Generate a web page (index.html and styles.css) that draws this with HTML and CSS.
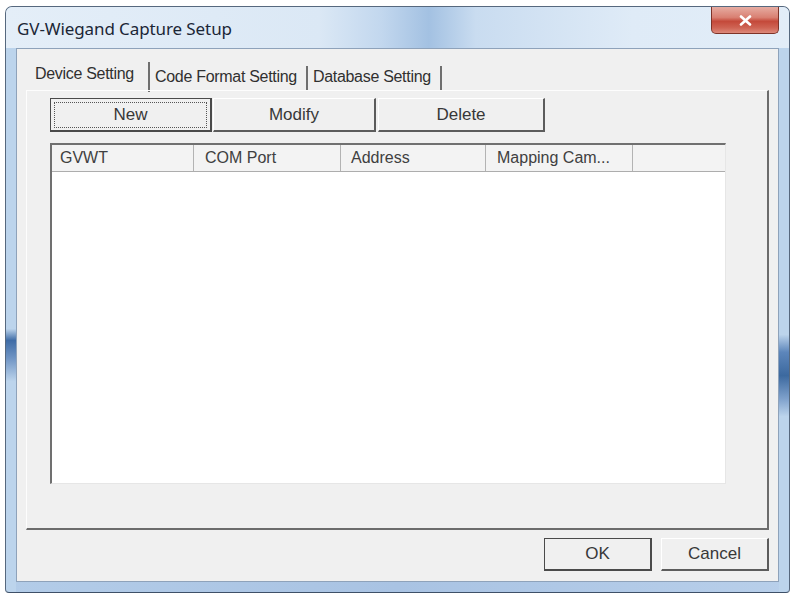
FILE: index.html
```html
<!DOCTYPE html>
<html lang="en">
<head>
    <meta charset="UTF-8">
    <meta name="viewport" content="width=device-width, initial-scale=1.0">
    <title>GV-Wiegand Capture Setup</title>
    <link rel="stylesheet" href="styles.css">
</head>
<body>

    <div class="window">
        <div class="titlebar">
            <div class="title">GV-Wiegand Capture Setup</div>
            <div class="close">
                <svg width="13" height="11" viewBox="0 0 13 11">
                    <path d="M2 1.5 L11 9.5 M11 1.5 L2 9.5" stroke="#fff" stroke-width="2.6" stroke-linecap="round"/>
                </svg>
            </div>
        </div>

        <div class="client">
            <div class="tabs">
                <div class="tab active">Device Setting</div>
                <div class="tab">Code Format Setting</div>
                <div class="tab">Database Setting</div>
            </div>

            <div class="panel">
                <div class="toolbar">
                    <button class="btn default w-new"><span class="focus">New</span></button>
                    <button class="btn w-modify">Modify</button>
                    <button class="btn w-delete">Delete</button>
                </div>

                <div class="list">
                    <div class="list-header">
                        <div class="col c1">GVWT</div>
                        <div class="col c2">COM Port</div>
                        <div class="col c3">Address</div>
                        <div class="col c4">Mapping Cam...</div>
                        <div class="col fill"></div>
                    </div>
                    <div class="list-body"></div>
                </div>
            </div>

            <div class="footer">
                <button class="btn default small">OK</button>
                <button class="btn small">Cancel</button>
            </div>
        </div>
    </div>

</body>
</html>
```

FILE: styles.css
```css
body {
    margin: 0;
    background-color: #fff;
    font-family: "Liberation Sans", Arial, sans-serif;
}

/* aero style frame */
.window {
    margin: 6px 0 0 5px;
    width: 785px;
    height: 587px;
    box-sizing: border-box;
    padding: 0 10px 10px 10px;
    border: 1px solid #56687e;
    border-bottom-color: #3e5068;
    border-radius: 7px 7px 4px 4px;
    display: flex;
    flex-direction: column;
    background:
        linear-gradient(to bottom, #bcd4ec 0, #bcd4ec 55%, #3f6ca6 57%, #6f94c4 60%, #bcd4ec 64%, #bcd4ec 100%) left top / 10px 100% no-repeat,
        linear-gradient(to bottom, #bcd4ec 0, #bcd4ec 56%, #5d86bb 59%, #3c699f 63%, #7fa1cc 67%, #bcd4ec 70%, #bcd4ec 100%) right top / 10px 100% no-repeat,
        linear-gradient(to right, #b3cce8 0, #a9c3e3 50%, #b8cfea 100%);
}

.titlebar {
    height: 41px;
    margin: 0 -10px;
    padding: 0 10px;
    display: flex;
    justify-content: space-between;
    align-items: flex-start;
    border-radius: 6px 6px 0 0;
    background: linear-gradient(to right, #e4eef8 0, #dbe8f5 40%, #c2d7ee 48%, #a3c1e2 54%, #c9dcf0 60%, #dfebf7 80%, #e2edf8 100%);
}

.title {
    padding: 12px 0 0 1px;
    font-family: "Noto Sans", "Open Sans", sans-serif;
    font-size: 17px;
    line-height: 20px;
    color: #1b2636;
    letter-spacing: -0.1px;
}

.close {
    width: 68px;
    height: 27px;
    box-sizing: border-box;
    border: 1px solid #7e3328;
    border-top: none;
    border-radius: 0 0 5px 5px;
    background: linear-gradient(to bottom, #e6aca2 0, #d98072 40%, #c4493a 55%, #cf6454 80%, #dd8a7c 100%);
    display: flex;
    justify-content: center;
    align-items: center;
}

.client {
    flex: 1;
    background-color: #f0f0f0;
    border: 1px solid #8ea2ba;
    padding: 13px 9px 0 9px;
    display: flex;
    flex-direction: column;
}

/* tab strip */
.tabs {
    display: flex;
    align-items: flex-end;
    height: 28px;
    padding-left: 4px;
}

.tab {
    height: 24px;
    padding: 0 9px 0 5px;
    border-right: 2px solid #6f6f6f;
    font-size: 16px;
    line-height: 22px;
    color: #303030;
    letter-spacing: -0.3px;
}

.tab.active {
    height: 30px;
    margin-bottom: -2px;
    line-height: 24px;
    padding-right: 14px;
}

.panel {
    height: 440px;
    box-sizing: border-box;
    border-top: 1px solid #fdfdfd;
    border-left: 1px solid #fdfdfd;
    border-right: 2px solid #6c6c6c;
    border-bottom: 2px solid #6c6c6c;
    padding: 7px 0 0 23px;
}

.toolbar {
    display: flex;
    gap: 1px;
}

/* classic raised buttons */
.btn {
    height: 34px;
    box-sizing: border-box;
    background-color: #f0f0f0;
    border-top: 1px solid #fff;
    border-left: 1px solid #fff;
    border-right: 2px solid #5c5c5c;
    border-bottom: 2px solid #5c5c5c;
    font-family: "Liberation Sans", Arial, sans-serif;
    font-size: 17px;
    color: #383838;
    padding: 0;
}

.btn.default {
    border: 1px solid #4a4a4a;
    border-right-width: 2px;
    border-bottom-width: 2px;
}

.btn .focus {
    display: flex;
    justify-content: center;
    align-items: center;
    margin: 3px;
    height: 24px;
    border: 1px dotted #555;
}

.w-new { width: 162px; }
.w-modify { width: 163px; }
.w-delete { width: 167px; margin-left: 1px; }

.list {
    margin-top: 11px;
    width: 676px;
    height: 341px;
    box-sizing: border-box;
    border-top: 2px solid #707070;
    border-left: 2px solid #707070;
    border-right: 1px solid #e6e6e6;
    border-bottom: 1px solid #e6e6e6;
    background-color: #fff;
    display: flex;
    flex-direction: column;
}

.list-header {
    display: flex;
    height: 26px;
    background-color: #f3f3f3;
    border-bottom: 1px solid #adadad;
}

.col {
    box-sizing: border-box;
    padding-left: 8px;
    border-right: 1px solid #b3b3b3;
    font-size: 16px;
    line-height: 26px;
    color: #404040;
    white-space: nowrap;
}

.c1 { width: 142px; }
.c2 { width: 147px; padding-left: 11px; }
.c3 { width: 145px; padding-left: 10px; }
.c4 { width: 147px; padding-left: 11px; }
.col.fill { flex: 1; border-right: none; }

.list-body {
    flex: 1;
}

.footer {
    display: flex;
    justify-content: flex-end;
    gap: 9px;
    margin-top: 8px;
}

.btn.small {
    width: 108px;
    height: 33px;
}
```
